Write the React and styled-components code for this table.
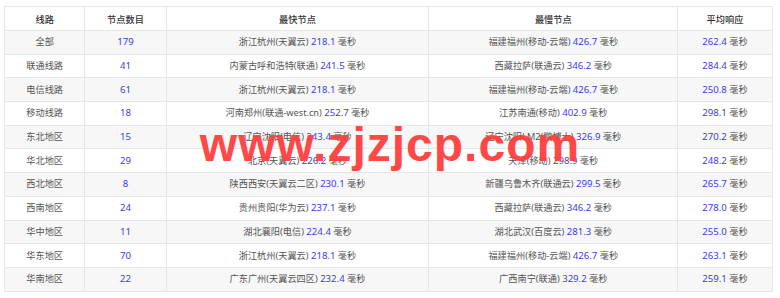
import React from "react";
import styled, { createGlobalStyle } from "styled-components";

const Global = createGlobalStyle`
  html, body { margin: 0; padding: 0; background: #fff; }
  body { font-family: "Noto Sans", "Noto Sans CJK SC", sans-serif; }
`;

const Page = styled.div`
  position: relative;
  width: 780px;
  height: 298px;
  padding: 6px 8px 0 4px;
  box-sizing: border-box;
  overflow: hidden;
`;

const Table = styled.table`
  width: 768px;
  border-collapse: collapse;
  table-layout: fixed;
  font-size: 9.2px;
  color: #555;
  border: 1px solid #e6e6e6;
`;

const HeadCell = styled.th`
  height: 23px;
  padding: 0;
  font-weight: 500;
  color: #333;
  text-align: center;
  border: 1px solid #e6e6e6;
  background: #fff;
`;

const Row = styled.tr`
  background: ${(p) => (p.$alt ? "#f7f7f7" : "#fff")};
`;

const Cell = styled.td`
  height: 22.7px;
  padding: 0;
  text-align: center;
  border: 1px solid #e6e6e6;
  white-space: nowrap;
  line-height: 14px;
`;

const Num = styled.span`
  color: #3b3bf0;
  font-size: 9.6px;
`;

const Watermark = styled.div`
  position: absolute;
  left: 0;
  right: 0;
  top: 117px;
  text-align: center;
  font-family: "Liberation Sans", Arial, sans-serif;
  font-weight: 700;
  font-size: 48px;
  letter-spacing: 1px;
  color: #ff3f3f;
  opacity: 0.95;
  pointer-events: none;
  line-height: 56px;
`;

const rows = [
  ["全部", "179", "浙江杭州(天翼云)", "218.1", "福建福州(移动-云端)", "426.7", "262.4"],
  ["联通线路", "41", "内蒙古呼和浩特(联通)", "241.5", "西藏拉萨(联通云)", "346.2", "284.4"],
  ["电信线路", "61", "浙江杭州(天翼云)", "218.1", "福建福州(移动-云端)", "426.7", "250.8"],
  ["移动线路", "18", "河南郑州(联通-west.cn)", "252.7", "江苏南通(移动)", "402.9", "298.1"],
  ["东北地区", "15", "辽宁沈阳(电信)", "243.4", "辽宁沈阳LM2(鹏博士)", "326.9", "270.2"],
  ["华北地区", "29", "北京(天翼云)", "226.2", "天津(移动)", "298.9", "248.2"],
  ["西北地区", "8", "陕西西安(天翼云二区)", "230.1", "新疆乌鲁木齐(联通云)", "299.5", "265.7"],
  ["西南地区", "24", "贵州贵阳(华为云)", "237.1", "西藏拉萨(联通云)", "346.2", "278.0"],
  ["华中地区", "11", "湖北襄阳(电信)", "224.4", "湖北武汉(百度云)", "281.3", "255.0"],
  ["华东地区", "70", "浙江杭州(天翼云)", "218.1", "福建福州(移动-云端)", "426.7", "263.1"],
  ["华南地区", "22", "广东广州(天翼云四区)", "232.4", "广西南宁(联通)", "329.2", "259.1"],
];

const Ms = ({ v }) => (
  <>
    <Num>{v}</Num> 毫秒
  </>
);

export default function App() {
  return (
    <>
      <Global />
      <Page>
        <Table>
          <colgroup>
            <col style={{ width: "80.3px" }} />
            <col style={{ width: "81.4px" }} />
            <col style={{ width: "262.6px" }} />
            <col style={{ width: "249px" }} />
            <col style={{ width: "94.4px" }} />
          </colgroup>
          <thead>
            <tr>
              <HeadCell>线路</HeadCell>
              <HeadCell>节点数目</HeadCell>
              <HeadCell>最快节点</HeadCell>
              <HeadCell>最慢节点</HeadCell>
              <HeadCell>平均响应</HeadCell>
            </tr>
          </thead>
          <tbody>
            {rows.map((r, i) => (
              <Row key={i} $alt={i % 2 === 0}>
                <Cell>{r[0]}</Cell>
                <Cell>
                  <Num>{r[1]}</Num>
                </Cell>
                <Cell>
                  {r[2]} <Ms v={r[3]} />
                </Cell>
                <Cell>
                  {r[4]} <Ms v={r[5]} />
                </Cell>
                <Cell>
                  <Ms v={r[6]} />
                </Cell>
              </Row>
            ))}
          </tbody>
        </Table>
        <Watermark>www.zjzjcp.com</Watermark>
      </Page>
    </>
  );
}
